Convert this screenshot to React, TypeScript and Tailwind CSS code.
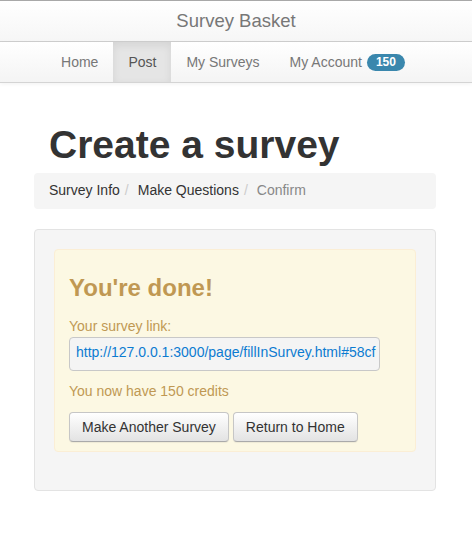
export default function App() {
  const navItems = ["Home", "Post", "My Surveys", "My Account"];
  const crumbs = ["Survey Info", "Make Questions"];

  return (
    <div className="min-h-[546px] bg-white font-['Liberation_Sans',Arial,sans-serif] text-[14px] text-[#333]">
      {/* title bar */}
      <div className="h-[42px] border-t border-[#a8a8a8] border-b border-b-[#cfcfcf] bg-gradient-to-b from-white to-[#f6f6f6] flex items-center justify-center">
        <span className="text-[18.5px] text-[#777] leading-none">Survey Basket</span>
      </div>

      {/* nav */}
      <div className="h-[41px] border-b border-[#d4d4d4] bg-gradient-to-b from-white to-[#f4f4f4] shadow-[0_1px_4px_rgba(0,0,0,0.06)]">
        <ul className="flex justify-center h-[40px] pr-[6px]">
          {navItems.map((item) => (
            <li
              key={item}
              className={`flex items-center px-[15px] h-[40px] ${
                item === "Post"
                  ? "bg-[#e5e5e5] text-[#555] shadow-[inset_0_3px_8px_rgba(0,0,0,0.08)]"
                  : "text-[#777]"
              }`}
            >
              {item}
              {item === "My Account" && (
                <span className="ml-[5px] inline-flex items-center justify-center w-[38px] h-[17px] rounded-full bg-[#3a87ad] text-white text-[12px] font-bold">
                  150
                </span>
              )}
            </li>
          ))}
        </ul>
      </div>

      <div className="ml-[34px] mr-[36px]">
        <h1 className="mt-[41px] pl-[15px] text-[39px] font-bold leading-[1.1] text-[#333]">
          Create a survey
        </h1>

        <div className="mt-[6px] h-[36px] rounded-[4px] bg-[#f5f5f5] px-[15px] flex items-center">
          {crumbs.map((c) => (
            <span key={c} className="flex items-center">
              <span>{c}</span>
              <span className="pl-[5px] pr-[9px] text-[#ccc]">/</span>
            </span>
          ))}
          <span className="text-[#888]">Confirm</span>
        </div>

        <div className="mt-[20px] h-[262px] rounded-[4px] border border-[#e3e3e3] bg-[#f5f5f5] p-[19px]">
          <div className="rounded-[4px] border border-[#fbeed5] bg-[#fcf8e3] px-[14px] pt-[14px] pb-[9px] text-[#c09853]">
            <h3 className="mt-[11px] text-[24px] font-bold leading-[1.1]">You're done!</h3>
            <p className="mt-[15px] leading-[20px]">Your survey link:</p>
            <textarea
              readOnly
              rows={1}
              wrap="off"
              value="http://127.0.0.1:3000/page/fillInSurvey.html#58cf"
              className="mt-[1px] block w-[311px] h-[34px] resize-none overflow-hidden whitespace-nowrap rounded-[4px] border border-[#c8c8c8] bg-[#f4f4f4] px-[6px] pt-[4px] leading-[20px] text-[#0c7bd1] outline-none"
            />
            <p className="mt-[10px] leading-[20px]">You now have 150 credits</p>
            <div className="mt-[11px] flex gap-[4px] text-[#333]">
              <button className="h-[30px] rounded-[4px] border border-[#c6c6c6] border-b-[#aaa] bg-gradient-to-b from-white to-[#e3e3e3] px-[12px] shadow-[0_1px_1px_rgba(0,0,0,0.06)]">
                Make Another Survey
              </button>
              <button className="h-[30px] rounded-[4px] border border-[#c6c6c6] border-b-[#aaa] bg-gradient-to-b from-white to-[#e3e3e3] px-[12px] shadow-[0_1px_1px_rgba(0,0,0,0.06)]">
                Return to Home
              </button>
            </div>
          </div>
        </div>
      </div>
    </div>
  );
}
